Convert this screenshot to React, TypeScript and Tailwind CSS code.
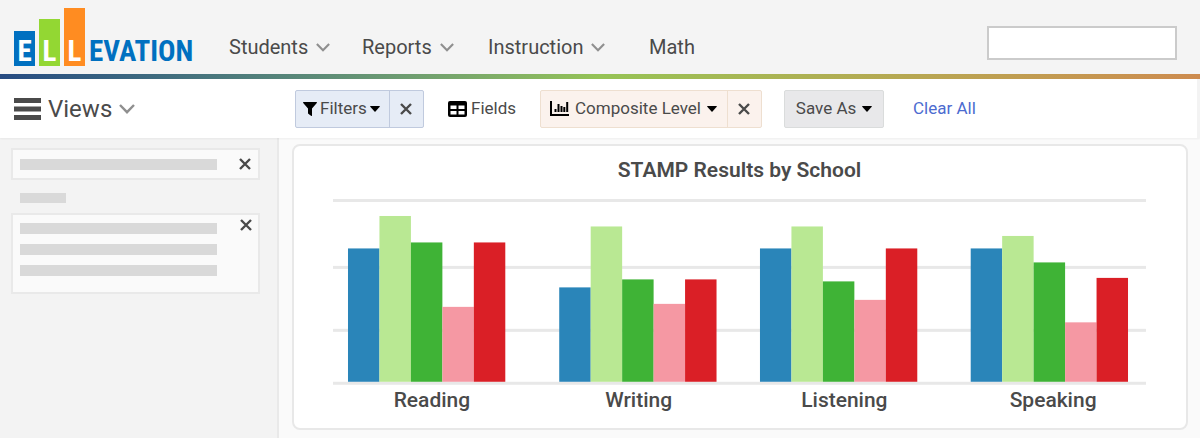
import React from "react";

const navItems = [
  { label: "Students", menu: true },
  { label: "Reports", menu: true },
  { label: "Instruction", menu: true },
  { label: "Math", menu: false },
];

const barColors = ["#2a85b9", "#b9e893", "#3fb336", "#f598a3", "#da1f26"];
const barWidth = 31.5;
const baseline = 184;

const groups = [
  { label: "Reading", x: 15, labelX: 99, values: [133.5, 166, 139.5, 75, 139.5] },
  { label: "Writing", x: 226.5, labelX: 306, values: [94.5, 155.5, 102.5, 78, 102.5] },
  { label: "Listening", x: 427.5, labelX: 512, values: [133.5, 155.5, 100.5, 82, 133.5] },
  { label: "Speaking", x: 638.5, labelX: 721, values: [133.5, 146, 119.5, 59.5, 104] },
];

const Chevron = ({ className }: { className: string }) => (
  <svg viewBox="0 0 16 10" fill="none" stroke="#8f8f8f" strokeWidth="2.4" className={className} aria-hidden="true">
    <path d="M1 1l7 7.2L15 1" />
  </svg>
);

const Caret = () => (
  <svg viewBox="0 0 10 6" className="h-1.5 w-2.5" aria-hidden="true">
    <path d="M0.6 0h8.8q.8 0 .3.7L5.5 5.4q-.5.5-1 0L.3.7Q-.2 0 .6 0z" fill="#000" />
  </svg>
);

const Cross = () => (
  <svg viewBox="0 0 12 12" className="size-3" aria-hidden="true">
    <path d="M1 1l10 10M11 1L1 11" stroke="#4a4a4a" strokeWidth="2.4" fill="none" />
  </svg>
);

const FunnelIcon = () => (
  <svg viewBox="0 0 14 14" className="size-3.5" aria-hidden="true">
    <path d="M.6 0h12.8q.9.3.4 1L9 6.6v6.8q-.2.9-1 .4L5.3 11.8Q5 11.5 5 11V6.6L.2 1Q-.3.3.6 0z" fill="#000" />
  </svg>
);

const TableIcon = () => (
  <svg viewBox="0 0 19 16" className="h-4 w-[19px]" aria-hidden="true">
    <rect width="19" height="16" rx="2" fill="#000" />
    <path d="M2.5 4.5h6V8h-6zM10.500 4.5h6V8h-6zM2.5 10h6v3.5h-6zM10.500 10h6v3.5h-6z" fill="#fff" />
  </svg>
);

const ChartIcon = () => (
  <svg viewBox="0 0 19 15" className="h-[15px] w-[19px]" aria-hidden="true">
    <path d="M1 0v14h18" stroke="#000" strokeWidth="2" fill="none" />
    <path d="M5.5 11V8M8.500 11V3M11.500 11V5M14.300 11V6M17.200 11V1" stroke="#000" strokeWidth="2" fill="none" />
  </svg>
);

const Logo = () => (
  <a
    href="#"
    className="flex items-end gap-1 text-[29px] leading-[30px] font-bold text-[#0070c0]"
    style={{ fontFamily: '"Roboto Condensed", "Liberation Sans Narrow", "Liberation Sans", sans-serif' }}
  >
    <span className="flex h-[35px] w-[21px] items-end justify-center bg-[#0070c0] text-white">E</span>
    <span className="flex h-[47px] w-[21px] items-end justify-center bg-[#93d733] text-white">L</span>
    <span className="flex h-[58px] w-[21px] items-end justify-center bg-[#ff8c21] text-white">L</span>
    <span>EVATION</span>
  </a>
);

const Header = () => (
  <header>
    <div className="flex h-[74px] items-center bg-[#f4f4f4] pr-[23px] pl-[14px]">
      <div className="w-[215px]">
        <Logo />
      </div>
      <nav className="mt-5 grid grid-cols-[133px_126px_161px_auto] text-xl">
        {navItems.map((item) => (
          <button key={item.label} type="button" className="flex items-center gap-2">
            {item.label}
            {item.menu && <Chevron className="h-[9px] w-[14px]" />}
          </button>
        ))}
      </nav>
      <input
        type="text"
        aria-label="Search"
        className="mt-3 ml-auto h-[34px] w-[190px] border-2 border-[#cbcbcb] bg-white px-2 outline-none"
      />
    </div>
    <div className="h-[5px] bg-linear-to-r from-[#274b82] via-[#95c355] to-[#cd8b4f]" />
  </header>
);

const Toolbar = () => (
  <div className="relative flex h-[59px] items-center border-r-[3px] border-[#f3f3f3] bg-white pl-[14px] text-[17px] shadow-xs">
    <button type="button" className="flex w-[281px] items-center gap-[7px] text-2xl">
      <svg viewBox="0 0 27 22" className="h-[22px] w-[27px]" fill="#4a4a4a" aria-hidden="true">
        <path d="M0 0h27v5H0zM0 8.500h27v5H0zM0 17h27v5H0z" />
      </svg>
      Views
      <Chevron className="h-[10px] w-4" />
    </button>
    <div className="flex items-center gap-[22px]">
      <div className="flex h-[38px] rounded-xs border border-[#c0cade] bg-[#e6ecf6]">
        <button type="button" className="flex w-[94px] items-center gap-[3px] border-r border-[#c0cade] pl-[7px]">
          <FunnelIcon />
          Filters
          <Caret />
        </button>
        <button type="button" aria-label="Remove filters" className="flex w-[33px] items-center justify-center pr-0.5">
          <Cross />
        </button>
      </div>
      <button type="button" className="flex items-center gap-1 px-0.5">
        <TableIcon />
        Fields
      </button>
      <div className="flex h-[38px] rounded-xs border border-[#eedfd0] bg-[#fbf2ed]">
        <button type="button" className="flex w-[187px] items-center gap-1.5 border-r border-[#eedfd0] pl-[9px]">
          <ChartIcon />
          Composite Level
          <Caret />
        </button>
        <button
          type="button"
          aria-label="Remove composite level"
          className="flex w-[33px] items-center justify-center pr-0.5"
        >
          <Cross />
        </button>
      </div>
      <button
        type="button"
        className="flex h-[38px] w-[100px] items-center justify-center gap-1.5 rounded-xs border border-[#dadcdc] bg-[#e8e8ea]"
      >
        Save As
        <Caret />
      </button>
      <a href="#" className="px-[7px] text-[#4c6bd0]">
        Clear All
      </a>
    </div>
  </div>
);

const Sidebar = () => (
  <aside className="w-[279px] shrink-0 border-r-2 border-[#e9e9e9] bg-[#f3f3f3] pt-2.5 pr-[17px] pl-[11px]">
    <div className="flex h-8 items-center justify-between border-2 border-[#e9e9e9] bg-[#fafafa] pr-[7px] pl-[7px]">
      <div className="h-[11px] w-[197px] bg-[#d9d9d9]" />
      <button type="button" aria-label="Remove view">
        <Cross />
      </button>
    </div>
    <div className="mt-[13px] ml-[9px] h-2.5 w-[46px] bg-[#d9d9d9]" />
    <div className="mt-2.5 flex h-[81px] items-start justify-between border-2 border-[#e9e9e9] bg-[#fafafa] pr-1.5 pl-[7px]">
      <div className="flex flex-col gap-2.5 pt-2">
        <div className="h-[11px] w-[197px] bg-[#d9d9d9]" />
        <div className="h-[11px] w-[197px] bg-[#d9d9d9]" />
        <div className="h-[11px] w-[197px] bg-[#d9d9d9]" />
      </div>
      <button type="button" aria-label="Remove group" className="pt-1">
        <Cross />
      </button>
    </div>
  </aside>
);

const ResultsChart = () => (
  <section className="rounded-lg border-2 border-[#e8e8e8] bg-white pt-2.5 pr-10 pb-1.5 pl-[39px]">
    <h2 className="text-center text-[21px] leading-7 font-semibold">STAMP Results by School</h2>
    <svg viewBox="0 0 814 224" className="mt-3.5 block w-full" role="img" aria-label="STAMP results by school">
      {[2, 69, 132, 185].map((y) => (
        <rect key={y} x="0" y={y - 1} width="814" height="3" fill="#e8e8e8" />
      ))}
      {groups.map((group) => (
        <g key={group.label}>
          {group.values.map((value, i) => (
            <rect
              key={i}
              x={group.x + i * barWidth}
              y={baseline - value}
              width={barWidth}
              height={value}
              fill={barColors[i]}
            />
          ))}
          <text x={group.labelX} y="209" textAnchor="middle" fill="#4a4a4a" className="text-[21px] font-medium">
            {group.label}
          </text>
        </g>
      ))}
    </svg>
  </section>
);

const App = () => {
  return (
    <div className="flex min-h-screen flex-col bg-[#fafafa] font-[Roboto,sans-serif] text-[#4a4a4a]">
      <Header />
      <Toolbar />
      <div className="flex grow">
        <Sidebar />
        <main className="min-w-0 grow pt-1.5 pr-3 pb-2 pl-[13px]">
          <ResultsChart />
        </main>
      </div>
    </div>
  );
};

export default App;
